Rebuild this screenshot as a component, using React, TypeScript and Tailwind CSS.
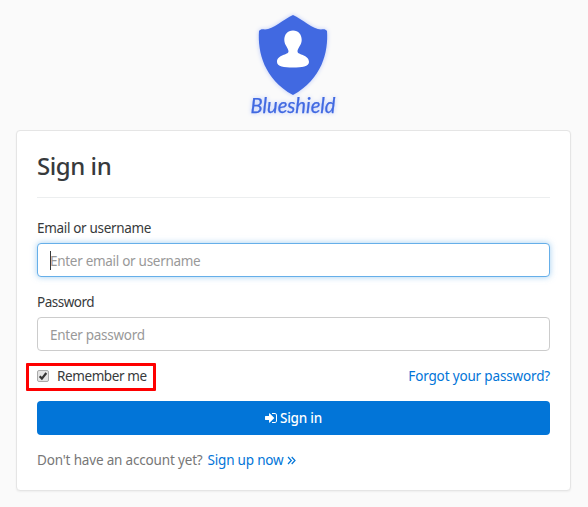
import type { ReactNode } from 'react';

function Logo() {
  return (
    <svg
      className="block h-[110px] w-[100px] [filter:drop-shadow(0_0_2px_#b9c8fb)]"
      viewBox="243 10 100 110"
      role="img"
      aria-label="Blueshield"
    >
      <path
        fill="#4169e1"
        d="M293 15C302 19 313 29.500 321 29.500C323.500 29 325.700 29 327 31C328.500 52 322 79 293 95C264 79 257.500 52 259 31C260.300 29 262.500 29 265 29.500C273 29.500 284 19 293 15Z"
      />
      <path
        fill="#fff"
        d="M293 30.500C298.500 30.500 301.700 34.500 301.700 40C301.700 45 297.500 48 297.500 51.500C297.500 55 309 54.500 309 62C309 66.500 302 67.500 293 67.500C284 67.500 277 66.500 277 62C277 54.500 288.500 55 288.500 51.500C288.500 48 284.300 45 284.300 40C284.300 34.500 287.500 30.500 293 30.500Z"
      />
      <text
        x="250.500"
        y="113"
        textLength="85"
        lengthAdjust="spacingAndGlyphs"
        className="fill-[#4169e1] stroke-[#4169e1] stroke-[0.25] font-[Lato,sans-serif] text-[20.500px] italic"
      >
        Blueshield
      </text>
    </svg>
  );
}

function Label({ children, id, className }: { children: ReactNode; id: string; className: string }) {
  return (
    <label htmlFor={id} className={`block leading-[20px] ${className}`}>
      {children}
    </label>
  );
}

function SignInIcon() {
  return (
    <svg viewBox="128 128 1536 1536" className="mr-[3px] size-[12px] fill-current">
      <path d="M1312 896q0 26-19 45l-544 544q-19 19-45 19t-45-19-19-45v-288h-448q-26 0-45-19t-19-45v-384q0-26 19-45t45-19h448v-288q0-26 19-45t45-19 45 19l544 544q19 19 19 45zm352-352v704q0 119-84.500 203.500t-203.500 84.500h-320q-13 0-22.500-9.500t-9.500-22.500q0-4-1-20t-.5-26.500 3-23.500 10-19.500 20.500-6.500h320q66 0 113-47t47-113v-704q0-66-47-113t-113-47h-312l-11.500-1-11.500-3-8-5.500-7-9-2-13.500q0-4-1-20t-.5-26.500 3-23.500 10-19.500 20.500-6.500h320q119 0 203.500 84.500t84.500 203.500z" />
    </svg>
  );
}

export default function App() {
  return (
    <main className="h-[507px] w-[588px] overflow-hidden bg-[#fafafa] pt-[10px] font-['Noto_Sans',sans-serif] text-[13.5px] leading-[20px] text-[#373a3c]">
      <div className="ml-[243px] h-[120px]">
        <Logo />
      </div>
      <section className="ml-4 h-[361px] w-[555px] rounded-[4px] border border-[#e5e5e5] bg-white px-5 pt-5 shadow-[0_1px_2px_rgba(0,0,0,0.05)]">
        <h1 className="h-[47px] border-b border-[#eceeef] text-[24px] leading-[30px] font-medium tracking-[-0.45px]">
          Sign in
        </h1>
        <div className="mt-[20px]">
          <Label id="email" className="tracking-[-0.32px]">
            Email or username
          </Label>
          <div className="relative mt-[5px]">
            <input
              id="email"
              placeholder="Enter email or username"
              className="block h-[34px] w-full rounded-[4px] border border-[#66afe9] bg-white px-3 pt-[2px] tracking-[-0.29px] shadow-[0_0_6px_rgba(102,175,233,0.6)] outline-none placeholder:text-[#999]"
            />
            <span className="absolute top-2 left-[13px] h-[19px] w-px bg-[#373a3c]" />
          </div>
        </div>
        <div className="mt-[15px]">
          <Label id="password" className="tracking-[-0.5px]">
            Password
          </Label>
          <input
            id="password"
            placeholder="Enter password"
            className="mt-[5px] block h-[34px] w-full rounded-[4px] border border-[#ccc] bg-white px-3 pt-[2px] tracking-[-0.28px] outline-none placeholder:text-[#999]"
          />
        </div>
        <div className="relative mt-[15px] flex h-5 items-center">
          <span className="absolute -top-[3px] -left-[11px] h-[28px] w-[130px] rounded-[1px] border-3 border-[#fe0000]" />
          <svg viewBox="0 0 13 13" className="size-[13px]">
            <rect x="0.500" y="0.500" width="11" height="11" rx="1.500" fill="#e4e4e4" stroke="#aaa" />
            <path d="M2.700 6.200L4.900 8.600L9.300 3" fill="none" stroke="#333" strokeWidth="2.200" />
          </svg>
          <span className="ml-[7px] tracking-[-0.4px]">Remember me</span>
          <a className="ml-auto tracking-[-0.16px] text-[#0275d8]">Forgot your password?</a>
        </div>
        <button className="mt-[15px] flex h-[34px] w-full items-center justify-center rounded-[4px] bg-[#0275d8] font-medium tracking-[-0.2px] text-white">
          <SignInIcon />
          Sign in
        </button>
        <p className="mt-[15px] flex items-center tracking-[-0.17px] text-[#777]">
          Don't have an account yet?
          <a className="ml-[5px] flex items-center tracking-[-0.2px] text-[#0275d8]">
            Sign up now
            <svg viewBox="0 0 9 9" className="mt-px ml-1 size-[9px] fill-none stroke-current stroke-[1.2]">
              <path d="M1 1L4.300 4.500L1 8M4.700 1L8 4.500L4.700 8" />
            </svg>
          </a>
        </p>
      </section>
    </main>
  );
}
